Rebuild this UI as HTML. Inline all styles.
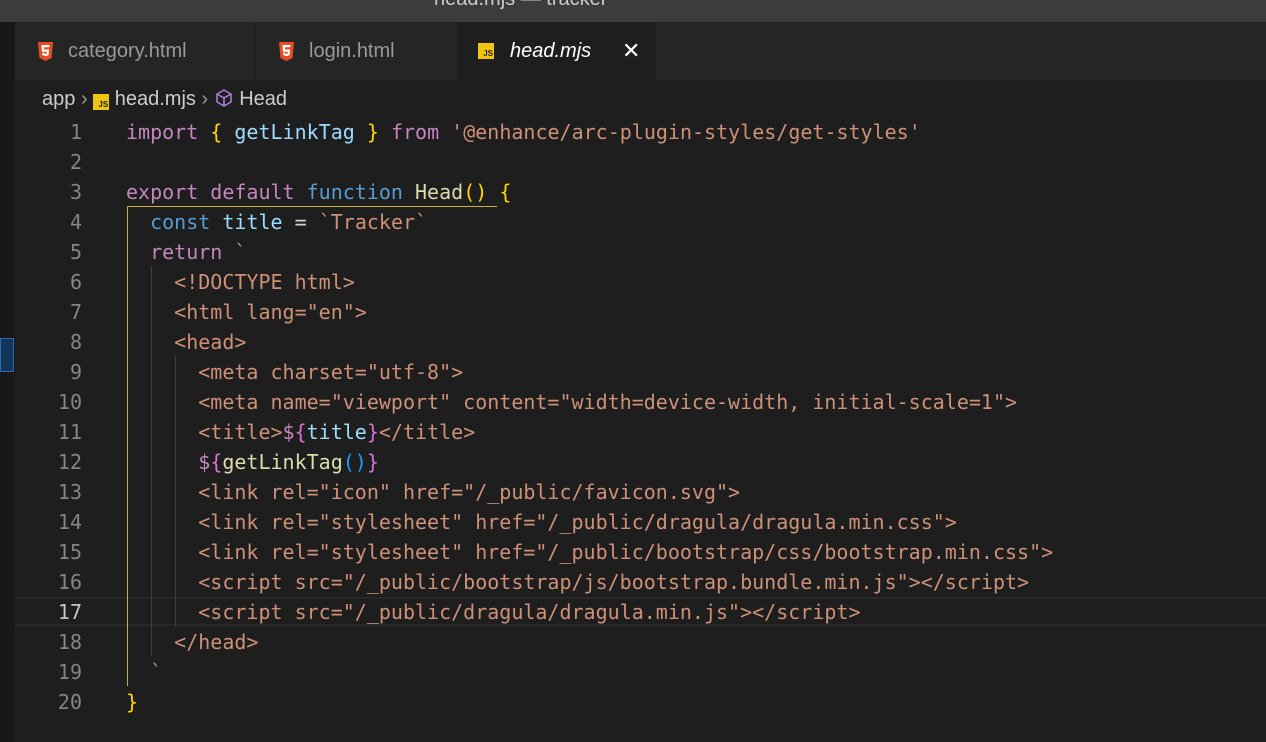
<!DOCTYPE html>
<html><head><meta charset="utf-8"><style>
body{margin:0;width:1266px;height:742px;background:#1e1e1e;overflow:hidden;position:relative;font-family:"Liberation Sans",sans-serif}
.tb{position:absolute;left:0;top:0;width:1266px;height:22px;background:#3c3c3c}
.tb span{position:absolute;left:434px;top:-12px;color:#ccc;font-size:20px}
.strip{position:absolute;left:0;top:22px;width:15px;height:720px;background:#181818}
.sel{position:absolute;left:0;top:338px;width:14px;height:34px;background:#15355a;border:1px solid #2a6bb0;box-sizing:border-box}
.tabs{position:absolute;left:15px;top:22px;width:1251px;height:58px;background:#252526}
.tab{position:absolute;top:0;height:58px;color:#999;font-size:20px;line-height:58px;border-right:1px solid #1e1e1e}
.tab.a{background:#1e1e1e;color:#fff;font-style:italic}
.h5{position:absolute;top:20px;width:17px;height:19px}
.js{position:absolute;top:21px;width:16px;height:16px;background:#f1c40f;color:#222;font-size:8px;font-weight:bold;line-height:22px;text-align:right;font-style:normal;box-sizing:border-box;padding-right:1px}
.bc{position:absolute;top:86px;left:42px;color:#ccc;font-size:20px;line-height:26px;white-space:nowrap}
.code{position:absolute;left:0;top:117px;font-family:"DejaVu Sans Mono","Liberation Mono",monospace;font-size:20px}
.l{position:absolute;left:126px;height:30px;line-height:30px;white-space:pre;color:#ce9178}
.n{position:absolute;left:30px;width:52px;text-align:right;height:30px;line-height:30px;color:#858585}
.k{color:#c586c0}.b{color:#569cd6}.v{color:#9cdcfe}.f{color:#dcdcaa}.y{color:#ffd700}.w{color:#d4d4d4}.p{color:#da70d6}.bl{color:#179fff}
.g{position:absolute;width:1px;background:#404040}
</style></head><body>
<div class="tb"><span>head.mjs — tracker</span></div>
<div class="strip"></div><div class="sel"></div>
<div class="tabs">
 <div class="tab" style="left:0;width:240px"><svg class="h5" style="left:22px" viewBox="0 0 17 19"><path d="M1 0h15l-1.4 16L8.5 19 2.4 16z" fill="#e44d26"/><path d="M4.5 3h8l-.2 2.3H6.9l.2 2.2h5l-.5 5.6-3.1 1-3.1-1-.2-2.4h2.2l.1 1 1 .3 1-.3.2-2H4.9z" fill="#fff"/></svg><span style="position:absolute;left:53px">category.html</span></div>
 <div class="tab" style="left:240px;width:202px"><svg class="h5" style="left:23px" viewBox="0 0 17 19"><path d="M1 0h15l-1.4 16L8.5 19 2.4 16z" fill="#e44d26"/><path d="M4.5 3h8l-.2 2.3H6.9l.2 2.2h5l-.5 5.6-3.1 1-3.1-1-.2-2.4h2.2l.1 1 1 .3 1-.3.2-2H4.9z" fill="#fff"/></svg><span style="position:absolute;left:54px">login.html</span></div>
 <div class="tab a" style="left:443px;width:197px"><div class="js" style="left:20px">JS</div><span style="position:absolute;left:52px">head.mjs</span><span style="position:absolute;left:164px;font-style:normal;font-size:22px">✕</span></div>
</div>
<div class="bc">app <span style="color:#999">›</span> <span style="display:inline-block;width:16px;height:16px;background:#f1c40f;color:#222;font-size:8px;font-weight:bold;vertical-align:-2px;text-align:right;line-height:22px;padding-right:1px;box-sizing:border-box">JS</span> head.mjs <span style="color:#999">›</span> <svg width="20" height="20" viewBox="0 0 20 20" style="vertical-align:-3px"><path d="M10 2l7 4v8l-7 4-7-4V6zM3 6l7 4 7-4M10 10v8" fill="none" stroke="#b180d7" stroke-width="1.5"/></svg> Head</div>
<div style="position:absolute;left:15px;top:597px;width:1251px;height:29px;border-top:2px solid #282828;border-bottom:2px solid #282828;box-sizing:border-box"></div>
<div style="position:absolute;left:127px;top:206px;width:370px;height:1px;background:#c8b22a"></div>
<div class="g" style="left:127px;top:206px;height:480px;background:#c8b22a"></div>
<div class="g" style="left:151px;top:266px;height:390px"></div>
<div class="g" style="left:175px;top:356px;height:270px"></div>
<div class="code">
<div class="n" style="top:0">1</div><div class="l" style="top:0"><span class="k">import</span> <span class="y">{</span> <span class="v">getLinkTag</span> <span class="y">}</span> <span class="k">from</span> '@enhance/arc-plugin-styles/get-styles'</div>
<div class="n" style="top:30px">2</div>
<div class="n" style="top:60px">3</div><div class="l" style="top:60px"><span class="k">export</span> <span class="k">default</span> <span class="b">function</span> <span class="f">Head</span><span class="y">()</span> <span class="y">{</span></div>
<div class="n" style="top:90px">4</div><div class="l" style="top:90px">  <span class="b">const</span> <span class="v">title</span> <span class="w">=</span> `Tracker`</div>
<div class="n" style="top:120px">5</div><div class="l" style="top:120px">  <span class="k">return</span> `</div>
<div class="n" style="top:150px">6</div><div class="l" style="top:150px">    &lt;!DOCTYPE html&gt;</div>
<div class="n" style="top:180px">7</div><div class="l" style="top:180px">    &lt;html lang="en"&gt;</div>
<div class="n" style="top:210px">8</div><div class="l" style="top:210px">    &lt;head&gt;</div>
<div class="n" style="top:240px">9</div><div class="l" style="top:240px">      &lt;meta charset="utf-8"&gt;</div>
<div class="n" style="top:270px">10</div><div class="l" style="top:270px">      &lt;meta name="viewport" content="width=device-width, initial-scale=1"&gt;</div>
<div class="n" style="top:300px">11</div><div class="l" style="top:300px">      &lt;title&gt;<span class="k">$</span><span class="p">{</span><span class="v">title</span><span class="p">}</span>&lt;/title&gt;</div>
<div class="n" style="top:330px">12</div><div class="l" style="top:330px">      <span class="k">$</span><span class="p">{</span><span class="f">getLinkTag</span><span class="bl">()</span><span class="p">}</span></div>
<div class="n" style="top:360px">13</div><div class="l" style="top:360px">      &lt;link rel="icon" href="/_public/favicon.svg"&gt;</div>
<div class="n" style="top:390px">14</div><div class="l" style="top:390px">      &lt;link rel="stylesheet" href="/_public/dragula/dragula.min.css"&gt;</div>
<div class="n" style="top:420px">15</div><div class="l" style="top:420px">      &lt;link rel="stylesheet" href="/_public/bootstrap/css/bootstrap.min.css"&gt;</div>
<div class="n" style="top:450px">16</div><div class="l" style="top:450px">      &lt;script src="/_public/bootstrap/js/bootstrap.bundle.min.js"&gt;&lt;/script&gt;</div>
<div class="n" style="top:480px;color:#c6c6c6">17</div><div class="l" style="top:480px">      &lt;script src="/_public/dragula/dragula.min.js"&gt;&lt;/script&gt;</div>
<div class="n" style="top:510px">18</div><div class="l" style="top:510px">    &lt;/head&gt;</div>
<div class="n" style="top:540px">19</div><div class="l" style="top:540px">  `</div>
<div class="n" style="top:570px">20</div><div class="l" style="top:570px"><span class="y">}</span></div>
</div>
</body></html>
